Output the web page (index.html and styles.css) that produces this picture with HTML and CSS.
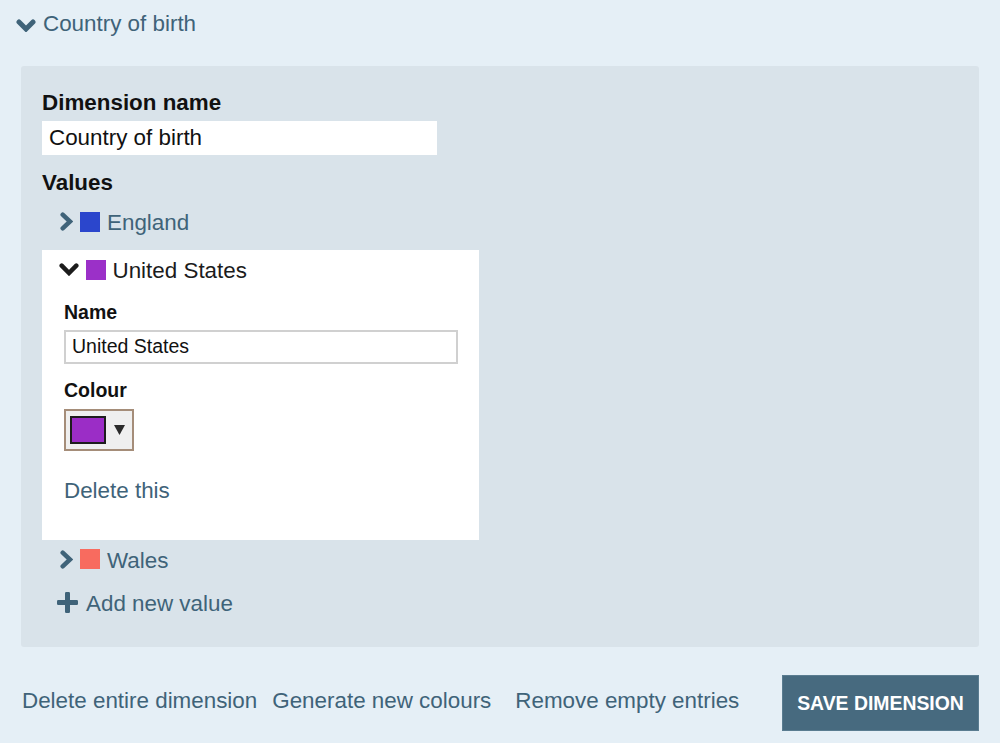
FILE: index.html
```html
<!DOCTYPE html>
<html lang="en">
<head>
<meta charset="utf-8">
<title>Dimension editor</title>
<link rel="stylesheet" href="styles.css">
</head>
<body>
<div class="page">
  <div class="dim-header">
    <svg class="chev-down" width="20" height="13" viewBox="0 0 20 13"><polyline points="3,3 10,10 17,3" fill="none" stroke="currentColor" stroke-width="5" stroke-linecap="round" stroke-linejoin="miter"/></svg>
    <span>Country of birth</span>
  </div>
  <div class="dim-body">
    <div class="panel">
      <div class="label">Dimension name</div>
      <input class="dim-input" type="text" value="Country of birth">
      <div class="label values-label">Values</div>
      <div class="value first">
        <div class="value-head">
          <svg class="chev-right" width="13" height="19" viewBox="0 0 13 19"><polyline points="2.7,2.7 10,9.5 2.7,16.3" fill="none" stroke="currentColor" stroke-width="4.5" stroke-linecap="round" stroke-linejoin="miter"/></svg>
          <span class="swatch sw-blue"></span>
          <span>England</span>
        </div>
      </div>
      <div class="value open">
        <div class="value-head">
          <svg class="chev-open" width="20" height="13" viewBox="0 0 20 13"><polyline points="2.7,2.7 10,10 17.3,2.7" fill="none" stroke="currentColor" stroke-width="4.5" stroke-linecap="round" stroke-linejoin="miter"/></svg>
          <span class="swatch sw-purple"></span>
          <span>United States</span>
        </div>
        <div class="value-body">
          <div class="sublabel name-label">Name</div>
          <input class="name-input" type="text" value="United States">
          <div class="sublabel colour-label">Colour</div>
          <div class="picker">
            <span class="picker-swatch"></span>
            <svg class="picker-arrow" width="11" height="10" viewBox="0 0 11 10"><polygon points="0,0 11,0 5.5,10" fill="#2b2b2b"/></svg>
          </div>
          <a class="link delete-this" href="#">Delete this</a>
        </div>
      </div>
      <div class="value">
        <div class="value-head">
          <svg class="chev-right" width="13" height="19" viewBox="0 0 13 19"><polyline points="2.7,2.7 10,9.5 2.7,16.3" fill="none" stroke="currentColor" stroke-width="4.5" stroke-linecap="round" stroke-linejoin="miter"/></svg>
          <span class="swatch sw-red"></span>
          <span>Wales</span>
        </div>
      </div>
      <div class="add-row">
        <svg class="plus" width="21" height="21" viewBox="0 0 21 21"><rect x="8" y="0" width="5" height="21" rx="1.2" fill="currentColor"/><rect x="0" y="8" width="21" height="5" rx="1.2" fill="currentColor"/></svg>
        <span>Add new value</span>
      </div>
    </div>
    <div class="actions">
      <a class="link act act-1" href="#">Delete entire dimension</a>
      <a class="link act act-2" href="#">Generate new colours</a>
      <a class="link act act-3" href="#">Remove empty entries</a>
      <button class="save" type="button">SAVE DIMENSION</button>
    </div>
  </div>
</div>
</body>
</html>
```
FILE: styles.css
```css
* { box-sizing: border-box; }

html, body {
  margin: 0;
  padding: 0;
  background: #e5eff6;
}

body {
  font-family: "Liberation Sans", Arial, Helvetica, sans-serif;
  font-size: 22.4px;
  line-height: 26px;
  color: #3f6379;
}

.page {
  width: 1000px;
  height: 743px;
  overflow: hidden;
}

.dim-header {
  display: flex;
  align-items: center;
  height: 37px;
  padding: 11px 0 0 16px;
  color: #3f6379;
}

.dim-header .chev-down {
  margin: 2px 7px 0 0;
  flex: none;
}

.dim-body {
  padding: 0 21px;
  margin-top: 29px;
}

.panel {
  background: #d9e3ea;
  border-radius: 3px;
  padding: 24px 21px 29.5px;
}

.label {
  font-weight: bold;
  color: #111;
}

.dim-input {
  display: block;
  margin-top: 5px;
  width: 395px;
  height: 34px;
  border: none;
  outline: none;
  padding: 0 7px;
  background: #fff;
  font-family: inherit;
  font-size: 22.4px;
  color: #111;
}

.values-label {
  margin-top: 14.5px;
}

.value {
  width: 437px;
}

.value.first {
  margin-top: 14.5px;
}

.value-head {
  display: flex;
  align-items: center;
  height: 26px;
  padding-left: 18px;
  color: #3f6379;
}

.value-head svg,
.value-head .swatch {
  flex: none;
  margin-bottom: 2.5px;
}

.chev-right {
  margin-right: 7px;
}

.swatch {
  width: 20px;
  height: 20px;
  margin-right: 7px;
}

.sw-blue { background: #2b46cc; }
.sw-purple { background: #9b30c8; }
.sw-red { background: #f86b5f; }

.value.open {
  background: #fff;
  margin: 14px 0 8px;
  padding: 8px 0 35.5px;
}

.value.open .value-head {
  padding-left: 17px;
  color: #1c1c1c;
}

.chev-open {
  margin-right: 6.5px;
}

.value-body {
  padding: 0 21px 0 22px;
}

.sublabel {
  font-weight: bold;
  font-size: 19.5px;
  line-height: 23px;
  color: #111;
}

.name-label {
  margin-top: 16.7px;
}

.name-input {
  display: block;
  width: 100%;
  height: 34px;
  margin-top: 6px;
  border: 2px solid #d0d0d0;
  outline: none;
  padding: 0 6px;
  background: #fff;
  font-family: inherit;
  font-size: 19.5px;
  color: #111;
}

.colour-label {
  margin-top: 15.7px;
}

.picker {
  display: flex;
  align-items: center;
  width: 70px;
  height: 42px;
  margin-top: 6.3px;
  padding: 5px 7px 5px 4px;
  border: 2px solid #a58d79;
  background: #efefef;
}

.picker-swatch {
  flex: none;
  width: 36px;
  height: 28px;
  background: #9b2dc6;
  border: 2px solid #1d1d1d;
  margin-right: 8px;
}

.picker-arrow {
  flex: none;
}

.link {
  color: #3f6379;
  text-decoration: none;
}

.delete-this {
  display: block;
  margin-top: 27.5px;
}

.add-row {
  display: flex;
  align-items: center;
  height: 26px;
  margin-top: 17.5px;
  padding-left: 15px;
  color: #3f6379;
}

.add-row .plus {
  flex: none;
  margin: 0 8px 3px 0;
}

.actions {
  display: flex;
  align-items: flex-start;
  margin-top: 28px;
}

.act {
  margin-top: 13.5px;
  white-space: nowrap;
}

.act-1 { margin-left: 1px; margin-right: 15px; }
.act-2 { margin-right: 24px; }

.save {
  margin-left: auto;
  width: 197px;
  height: 56px;
  padding: 2px 0 0;
  border: 1px solid #5a7c90;
  background: #476a7f;
  color: #fff;
  font-family: inherit;
  font-weight: bold;
  font-size: 19.4px;
  line-height: 23px;
  letter-spacing: 0;
  cursor: pointer;
}
```
